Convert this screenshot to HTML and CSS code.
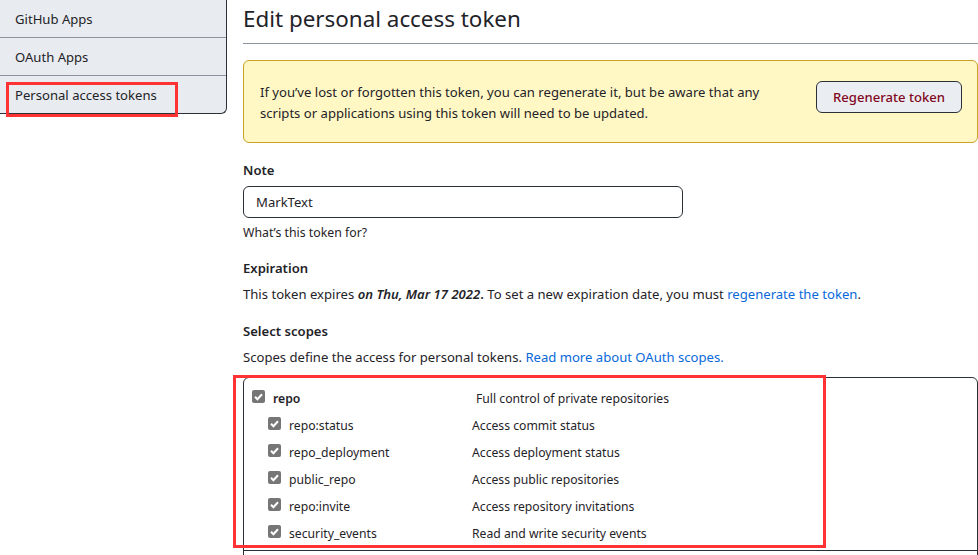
FILE: index.html
```html
<!DOCTYPE html>
<html lang="en">
<head>
<meta charset="utf-8">
<title>Edit personal access token</title>
<link rel="stylesheet" href="styles.css">
</head>
<body>
<div class="layout">
  <nav class="sidebar">
    <a class="side-item first" href="#">GitHub Apps</a>
    <a class="side-item" href="#">OAuth Apps</a>
    <a class="side-item last" href="#">Personal access tokens</a>
    <span class="mark mark-side"></span>
  </nav>

  <main class="main">
    <h1 class="title">Edit personal access token</h1>

    <div class="flash">
      <p class="flash-text">If you’ve lost or forgotten this token, you can regenerate it, but be aware that any scripts or applications using this token will need to be updated.</p>
      <button class="btn-danger" type="button">Regenerate token</button>
    </div>

    <div class="field note-field">
      <label class="label" for="note">Note</label>
      <input id="note" class="input" type="text" value="MarkText">
      <p class="hint">What’s this token for?</p>
    </div>

    <div class="field">
      <h3 class="label">Expiration</h3>
      <p class="text">This token expires <strong><em>on Thu, Mar 17 2022</em>.</strong> To set a new expiration date, you must <a href="#" class="link">regenerate the token</a>.</p>
    </div>

    <div class="field">
      <h3 class="label">Select scopes</h3>
      <p class="text">Scopes define the access for personal tokens. <a href="#" class="link">Read more about OAuth scopes.</a></p>
    </div>

    <div class="scopes-wrap">
      <div class="scopes">
        <div class="scope-group">
          <div class="scope parent">
            <span class="cb"><svg viewBox="0 0 13 13" width="13" height="13"><path d="M3 6.8l2.4 2.4L10 4.2" fill="none" stroke="#fff" stroke-width="2"/></svg></span>
            <span class="scope-name">repo</span>
            <span class="scope-desc">Full control of private repositories</span>
          </div>
          <div class="scope child">
            <span class="cb"><svg viewBox="0 0 13 13" width="13" height="13"><path d="M3 6.8l2.4 2.4L10 4.2" fill="none" stroke="#fff" stroke-width="2"/></svg></span>
            <span class="scope-name">repo:status</span>
            <span class="scope-desc">Access commit status</span>
          </div>
          <div class="scope child">
            <span class="cb"><svg viewBox="0 0 13 13" width="13" height="13"><path d="M3 6.8l2.4 2.4L10 4.2" fill="none" stroke="#fff" stroke-width="2"/></svg></span>
            <span class="scope-name">repo_deployment</span>
            <span class="scope-desc">Access deployment status</span>
          </div>
          <div class="scope child">
            <span class="cb"><svg viewBox="0 0 13 13" width="13" height="13"><path d="M3 6.8l2.4 2.4L10 4.2" fill="none" stroke="#fff" stroke-width="2"/></svg></span>
            <span class="scope-name">public_repo</span>
            <span class="scope-desc">Access public repositories</span>
          </div>
          <div class="scope child">
            <span class="cb"><svg viewBox="0 0 13 13" width="13" height="13"><path d="M3 6.8l2.4 2.4L10 4.2" fill="none" stroke="#fff" stroke-width="2"/></svg></span>
            <span class="scope-name">repo:invite</span>
            <span class="scope-desc">Access repository invitations</span>
          </div>
          <div class="scope child">
            <span class="cb"><svg viewBox="0 0 13 13" width="13" height="13"><path d="M3 6.8l2.4 2.4L10 4.2" fill="none" stroke="#fff" stroke-width="2"/></svg></span>
            <span class="scope-name">security_events</span>
            <span class="scope-desc">Read and write security events</span>
          </div>
        </div>
        <div class="scope-group next"></div>
      </div>
      <span class="mark mark-scopes"></span>
    </div>
  </main>
</div>
</body>
</html>
```

FILE: styles.css
```css
* { box-sizing: border-box; }

html, body {
  margin: 0;
  padding: 0;
  background: #ffffff;
  overflow: hidden;
}

body {
  font-family: "Noto Sans", "Open Sans", sans-serif;
  font-size: 13.1px;
  line-height: 21px;
  color: #1f2328;
}

.layout {
  display: flex;
  align-items: flex-start;
  gap: 16px;
  width: 978px;
  height: 555px;
  overflow: hidden;
}

/* Sidebar */
.sidebar {
  position: relative;
  flex: 0 0 227px;
  display: flex;
  flex-direction: column;
  background: #e8ecf0;
  border: 1px solid #2b3036;
  border-top: none;
  border-left: none;
  border-radius: 0 0 6px 0;
}

.side-item {
  display: block;
  height: 38px;
  padding: 9px 15px 7px;
  color: #1f2328;
  text-decoration: none;
  border-bottom: 1px solid #8c959f;
  line-height: 21px;
}

.side-item.last { border-bottom: none; height: 37px; }

.mark {
  position: absolute;
  border: 3px solid #ff3333;
  pointer-events: none;
}

.mark-side {
  left: 6px;
  top: 82px;
  width: 172px;
  height: 35px;
}

/* Main */
.main {
  flex: 1 1 auto;
  min-width: 0;
}

.title {
  margin: 0;
  height: 44px;
  padding-top: 4px;
  font-size: 22.4px;
  line-height: 30px;
  font-weight: 400;
  color: #1f2328;
  border-bottom: 1px solid #8c959f;
}

.flash {
  display: flex;
  align-items: flex-start;
  justify-content: space-between;
  margin-top: 16px;
  padding: 20px 15px 19px 16px;
  background: #fff8c5;
  border: 1px solid #c9a227;
  border-radius: 6px;
}

.flash-text {
  margin: 1px 0 -1px;
  max-width: 520px;
  color: #1f2328;
}

.btn-danger {
  height: 32px;
  padding: 0 16px;
  font-family: inherit;
  font-size: 13.1px;
  font-weight: 500;
  color: #82071e;
  background: #eaeef2;
  border: 1px solid #2b3036;
  border-radius: 6px;
}

.field { margin-top: 16px; }
.note-field { margin-top: 17px; }

.label {
  display: block;
  margin: 0;
  font-size: 13.1px;
  line-height: 21px;
  font-weight: 600;
  color: #1f2328;
}

.input {
  display: block;
  margin-top: 5px;
  width: 440px;
  height: 32px;
  padding: 0 12px;
  font-family: inherit;
  font-size: 13.1px;
  color: #1f2328;
  background: #fff;
  border: 1px solid #2b3036;
  border-radius: 6px;
}

.hint {
  margin: 6px 0 0;
  font-size: 12.3px;
  line-height: 18px;
  color: #1f2328;
}

.text {
  margin: 6px 0 0;
}

.field + .field .text { margin-top: 5px; }

.text strong { font-weight: 600; }

.link {
  color: #0969da;
  text-decoration: none;
}

/* Scopes */
.scopes-wrap {
  position: relative;
  margin-top: 9px;
}

.scopes {
  border: 1px solid #2b3036;
  border-radius: 6px;
}

.scope-group {
  padding: 7px 0 3px;
  border-bottom: 1px solid #2b3036;
}

.scope-group.next {
  height: 40px;
  border-bottom: none;
}

.scope {
  display: flex;
  align-items: center;
  height: 27px;
  font-size: 12.2px;
}

.scope.parent { padding-left: 8px; }
.scope.child { padding-left: 24px; }

.cb {
  flex: 0 0 13px;
  width: 13px;
  height: 13px;
  margin-right: 8px;
  margin-top: -5px;
  border-radius: 2px;
  background: #767676;
  display: flex;
}

.scope-name {
  flex: 0 0 auto;
}

.parent .scope-name {
  width: 203px;
  font-weight: 600;
}

.child .scope-name { width: 183px; }

.mark-scopes {
  left: -10px;
  top: -2px;
  width: 593px;
  height: 173px;
}
```
